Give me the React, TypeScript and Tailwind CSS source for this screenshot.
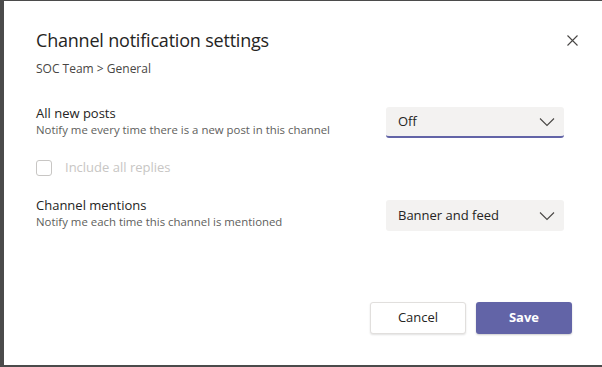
import React from "react";

const Chevron = () => (
  <svg width="16" height="10" viewBox="0 0 16 10" fill="none">
    <path d="M1 1.5 L8 8.5 L15 1.5" stroke="#484644" strokeWidth="1.1" />
  </svg>
);

export default function App() {
  return (
    <div
      className="w-[602px] h-[367px] bg-[#4b4b4b] pt-px pl-[4px] overflow-hidden"
      style={{ fontFamily: '"Open Sans", "Noto Sans", sans-serif' }}
    >
      <div className="relative w-[598px] h-[364px] bg-white pl-[32px] pr-[38px]">
        <button className="absolute right-[24px] top-[33px] w-[12px] h-[12px] flex items-center justify-center">
          <svg width="11" height="11" viewBox="0 0 11 11">
            <path d="M0.5 0.5 L10.5 10.5 M10.5 0.5 L0.5 10.5" stroke="#484644" strokeWidth="1.1" />
          </svg>
        </button>
        <div className="pt-[27px] text-[18px] leading-[24px] text-[#252423] tracking-[-0.2px]">
          Channel notification settings
        </div>
        <div className="mt-[9px] text-[12px] leading-[16px] text-[#484644]">SOC Team &gt; General</div>

        <div className="mt-[27px] flex items-start justify-between">
          <div>
            <div className="text-[13px] leading-[18px] text-[#252423]">All new posts</div>
            <div className="text-[11.4px] leading-[15px] text-[#605e5c]">
              Notify me every time there is a new post in this channel
            </div>
          </div>
          <div className="mt-[3px] w-[178px] h-[31px] bg-[#f3f2f1] rounded-[3px] border-b-2 border-[#6264a7] flex items-center justify-between pl-[12px] pr-[9px]">
            <span className="text-[13px] text-[#252423]">Off</span>
            <Chevron />
          </div>
        </div>

        <div className="mt-[21px] h-[18px] flex items-center">
          <div className="w-[16px] h-[16px] rounded-[3px] border border-[#c8c6c4]" />
          <span className="ml-[13px] text-[13px] text-[#c8c6c4]">Include all replies</span>
        </div>

        <div className="mt-[19px] flex items-start justify-between">
          <div>
            <div className="text-[13px] leading-[18px] text-[#252423]">Channel mentions</div>
            <div className="text-[11.4px] leading-[15px] text-[#605e5c]">
              Notify me each time this channel is mentioned
            </div>
          </div>
          <div className="mt-[4px] w-[178px] h-[31px] bg-[#f3f2f1] rounded-[3px] flex items-center justify-between pl-[12px] pr-[9px]">
            <span className="text-[13px] text-[#252423]">Banner and feed</span>
            <Chevron />
          </div>
        </div>

        <div className="absolute right-[30px] top-[301px] flex gap-[10px]">
          <button className="w-[96px] h-[32px] bg-white border border-[#e1dfdd] rounded-[3px] shadow-[0_1px_2px_rgba(0,0,0,0.12)] text-[13px] text-[#252423]">
            Cancel
          </button>
          <button className="w-[96px] h-[32px] bg-[#6264a7] rounded-[3px] shadow-[0_1px_2px_rgba(0,0,0,0.2)] text-[13px] font-bold text-white">
            Save
          </button>
        </div>
      </div>
    </div>
  );
}
